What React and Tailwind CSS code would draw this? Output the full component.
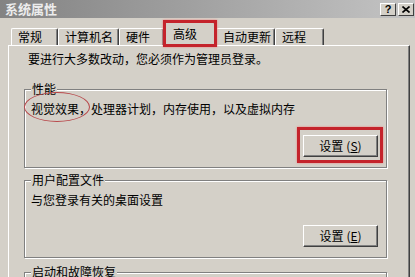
import React from 'react'

// Windows classic "系统属性" dialog, 高级 tab
const tabs = [
  { name: '常规', w: 'w-[47px]' },
  { name: '计算机名', w: 'w-[61px]' },
  { name: '硬件', w: 'w-[45px]' },
  { name: '高级', w: 'w-[52px]', active: true },
  { name: '自动更新', w: 'w-[59px]' },
  { name: '远程', w: 'w-[49px]' },
]

const Button = ({ hotkey }) => (
  <div className="w-[75px] h-[22px] flex items-center justify-center bg-[#d4d0c8] border-t border-l border-white border-r border-b border-r-[#404040] border-b-[#404040] shadow-[inset_-1px_-1px_0_#808080] text-[12px] leading-none text-black">
    <span>设置</span>
    <span className="ml-[3px]">(<span className="underline">{hotkey}</span>)</span>
  </div>
)

const Group = ({ title, children, className = '' }) => (
  <fieldset className={`mx-[15px] w-[363px] border border-[#808080] shadow-[1px_1px_0_#fff,inset_1px_1px_0_#fff] px-[6px] ${className}`}>
    <legend className="px-[1px] bg-[#d4d0c8] text-[12px] leading-[14px] text-black">{title}</legend>
    {children}
  </fieldset>
)

export default function App() {
  return (
    <div className="w-[415px] h-[277px] overflow-hidden bg-[#d4d0c8] font-['Noto_Sans_CJK_SC','Liberation_Sans',sans-serif]">
      {/* title bar */}
      <div className="h-[18px] flex justify-between bg-gradient-to-r from-[#838383] to-[#c4c4c4]">
        <span className="pl-[5px] pt-[1px] text-[13px] leading-[16px] font-bold text-[#ececec]">系统属性</span>
        <div className="flex gap-[2px] pt-[3px] pr-[1px]">
          <div className="w-[16px] h-[13px] flex items-center justify-center bg-[#d4d0c8] border-t border-l border-white border-r border-b border-r-[#404040] border-b-[#404040] text-[11px] font-bold leading-none font-['Liberation_Sans',sans-serif]">?</div>
          <div className="w-[16px] h-[13px] flex items-center justify-center bg-[#d4d0c8] border-t border-l border-white border-r border-b border-r-[#404040] border-b-[#404040]">
            <svg width="8" height="7" viewBox="0 0 8 7">
              <path d="M0.5 0.5 L7.5 6.5 M7.5 0.5 L0.5 6.5" stroke="#000" strokeWidth="1.6" />
            </svg>
          </div>
        </div>
      </div>

      {/* tabs */}
      <div className="h-[27px] flex items-end pl-[11px]">
        {tabs.map((tab) =>
          tab.active ? (
            <div
              key={tab.name}
              className={`relative z-10 -mb-[1px] h-[24px] ${tab.w} pl-[8px] pb-[2px] flex items-center bg-[#d4d0c8] border-t border-l border-white border-r border-r-[#404040] shadow-[inset_-1px_0_0_#808080] rounded-t-[2px] text-[12px] leading-none`}
            >
              {tab.name}
              <div className="absolute -left-[2px] -top-[3px] -right-[2px] -bottom-[1px] border-[3px] border-[#c4232b] shadow-[0_0_2px_#f08080]" />
            </div>
          ) : (
            <div
              key={tab.name}
              className={`h-[17px] ${tab.w} pl-[6px] flex items-center border-t border-l border-white border-r border-r-[#404040] shadow-[inset_-1px_0_0_#808080] rounded-t-[2px] text-[12px] leading-none`}
            >
              {tab.name}
            </div>
          )
        )}
      </div>

      {/* tab panel */}
      <div className="ml-[8px] w-[402px] h-[260px] border-t border-l border-white border-r border-r-[#404040] shadow-[inset_-1px_0_0_#808080] pt-[6px]">
        <p className="pl-[19px] text-[12px] leading-[14px] text-black">要进行大多数改动，您必须作为管理员登录。</p>

        <Group title="性能" className="mt-[16px] pb-[10px]">
          <div className="mt-[6px] flex text-[12px] leading-[14px] text-black">
            <span className="relative">
              视觉效果，
              <span className="absolute -left-[7px] -top-[10px] w-[66px] h-[30px] rounded-[50%] border-[1.5px] border-[#b8474a]" />
            </span>
            <span>处理器计划，内存使用，以及虚拟内存</span>
          </div>
          <div className="mt-[19px] flex justify-end pr-[2px]">
            <div className="relative">
              <Button hotkey="S" />
              <div className="absolute -left-[6px] -top-[8px] -right-[5px] -bottom-[6px] border-[3px] border-[#c4232b] shadow-[0_0_2px_#f08080]" />
            </div>
          </div>
        </Group>

        <Group title="用户配置文件" className="mt-[5px] pb-[10px]">
          <p className="mt-[6px] text-[12px] leading-[14px] text-black">与您登录有关的桌面设置</p>
          <div className="mt-[18px] flex justify-end pr-[2px]">
            <Button hotkey="E" />
          </div>
        </Group>

        <Group title="启动和故障恢复" className="mt-[7px] h-[60px]" />
      </div>
    </div>
  )
}
